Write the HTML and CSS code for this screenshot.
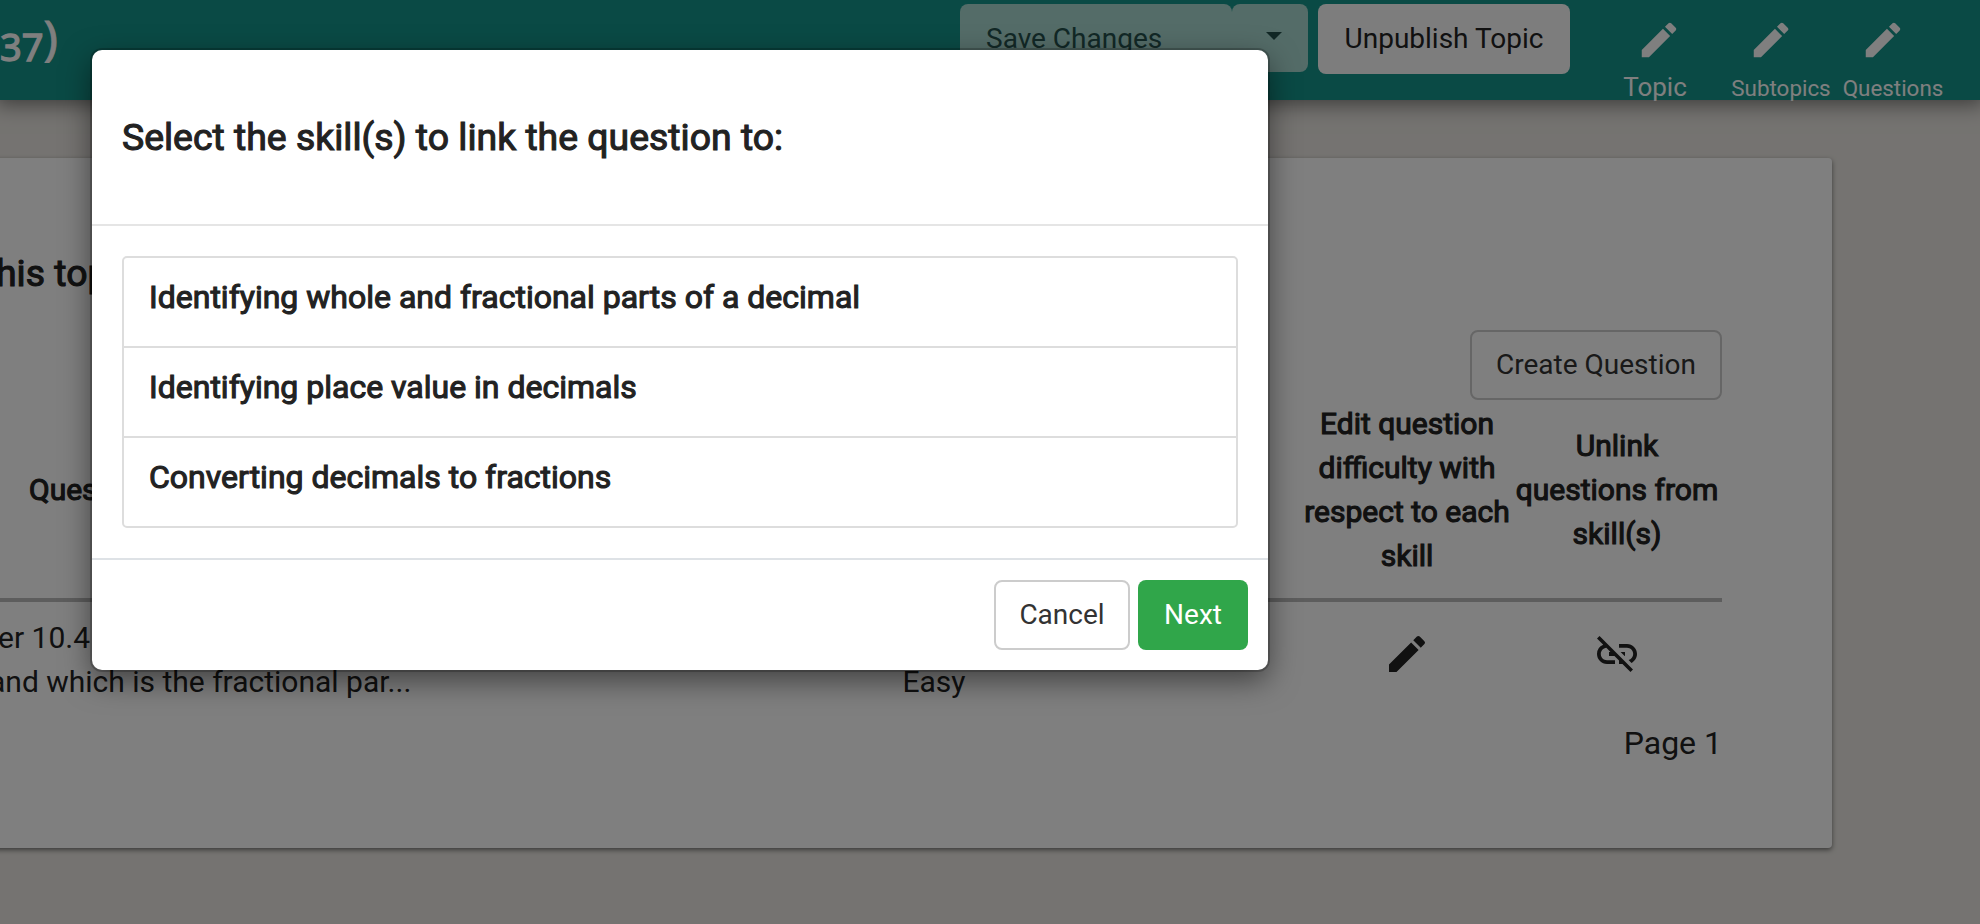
FILE: index.html
```html
<!DOCTYPE html>
<html lang="en">
<head>
<meta charset="utf-8">
<title>Topic editor</title>
<link rel="stylesheet" href="styles.css">
</head>
<body>
<svg class="defs" width="0" height="0">
  <symbol id="edit" viewBox="0 0 24 24"><path d="M3 17.25V21h3.75L17.81 9.94l-3.75-3.75L3 17.25zM20.71 7.04a1 1 0 0 0 0-1.41l-2.34-2.34a1 1 0 0 0-1.41 0l-1.83 1.83 3.75 3.75 1.83-1.83z"/></symbol>
  <symbol id="link-off" viewBox="0 0 24 24"><path d="M17 7h-4v1.9h4c1.71 0 3.1 1.39 3.1 3.1 0 1.43-.98 2.63-2.31 2.98l1.46 1.46C20.88 15.61 22 13.95 22 12c0-2.76-2.24-5-5-5zm-1 4h-2.19l2 2H16v-2zM2 4.27l3.11 3.11A4.991 4.991 0 0 0 2 12c0 2.76 2.24 5 5 5h4v-1.9H7c-1.71 0-3.1-1.39-3.1-3.1 0-1.59 1.21-2.9 2.76-3.07L8.73 11H8v2h2.73L13 15.27V17h1.73l4.01 4L20 19.74 3.27 3 2 4.27z"/></symbol>
</svg>

<header class="navbar">
  <div class="topic-title">37<span class="paren">)</span></div>
  <div class="save-group">
    <button class="btn save">Save Changes</button>
    <button class="btn caret"><i></i></button>
  </div>
  <button class="btn unpublish">Unpublish Topic</button>
  <nav class="tabs">
    <a class="tab topic"><svg><use href="#edit"/></svg><span>Topic</span></a>
    <a class="tab subtopics"><svg><use href="#edit"/></svg><span>Subtopics</span></a>
    <a class="tab questions"><svg><use href="#edit"/></svg><span>Questions</span></a>
  </nav>
</header>

<main class="card">
  <h2 class="card-title bold">his topic</h2>
  <div class="actions"><button class="btn create">Create Question</button></div>
  <div class="row head bold">
    <div class="question-head">Question</div>
    <div></div>
    <div></div>
    <div>Edit question difficulty with respect to each skill</div>
    <div>Unlink questions from skill(s)</div>
  </div>
  <div class="row item">
    <div class="question"><span class="line-one">er 10.4</span><br><span class="line-two">and which is the fractional par...</span></div>
    <div class="level">Easy</div>
    <div class="skill">t</div>
    <div class="icon"><svg><use href="#edit"/></svg></div>
    <div class="icon"><svg><use href="#link-off"/></svg></div>
  </div>
  <div class="pager">Page 1</div>
</main>

<div class="backdrop">
  <section class="modal">
    <header class="modal-header"><h3 class="bold">Select the skill(s) to link the question to:</h3></header>
    <div class="modal-body">
      <ul class="skills bold">
        <li>Identifying whole and fractional parts of a decimal</li>
        <li>Identifying place value in decimals</li>
        <li>Converting decimals to fractions</li>
      </ul>
    </div>
    <footer class="modal-footer">
      <button class="btn cancel">Cancel</button>
      <button class="btn next">Next</button>
    </footer>
  </section>
</div>
</body>
</html>
```

FILE: styles.css
```css
* { box-sizing: border-box; }
body {
  margin: 0;
  height: 924px;
  overflow: hidden;
  background: #eae7e2;
  color: #222;
  font: 30px/44px Roboto, sans-serif;
}
h2, h3, ul { margin: 0; padding: 0; font-weight: 400; list-style: none; }
.bold { -webkit-text-stroke: 1.1px currentColor; }
.defs { position: absolute; }
svg { fill: currentColor; }

.btn {
  display: block;
  margin: 0;
  padding: 0;
  height: 70px;
  border: 0;
  border-radius: 8px;
  font: 28px/66px Roboto, sans-serif;
  text-align: center;
  white-space: nowrap;
}

.navbar {
  position: relative;
  z-index: 1;
  display: flex;
  align-items: flex-start;
  height: 100px;
  padding-top: 4px;
  background: #15948a;
  box-shadow: 0 0 20px 4px rgba(0, 0, 0, 0.5);
}
.topic-title {
  width: 960px;
  color: #fff;
  font: 38px/50px "Noto Sans", sans-serif;
  padding-top: 17px;
  -webkit-text-stroke: 1.3px #fff;
}
.topic-title .paren { position: relative; top: -6px; font-size: 48px; line-height: 0; -webkit-text-stroke-width: 0.8px; }
.save-group { display: flex; width: 348px; margin-right: 10px; }
.save-group .btn { height: 68px; background: #a8d8d0; color: #24504c; }
.btn.save { width: 272px; padding: 1px 0 0 26px; text-align: left; }
.btn.caret { display: flex; width: 76px; padding: 28px 0 0 34px; }
.caret i { border: 8px solid transparent; border-top-color: #24504c; border-bottom: 0; }
.btn.unpublish { width: 252px; background: #fbfbfb; color: #222; }
.tabs { display: flex; margin-left: 33px; color: #fff; }
.tab { display: flex; flex-direction: column; align-items: center; width: 112px; padding-top: 13px; }
.tab svg { width: 46px; height: 46px; }
.tab span { margin-top: 7px; font-size: 22.4px; line-height: 36px; white-space: nowrap; }
.tab.topic span { margin-top: 6px; font-size: 26px; transform: translateX(-4px); }
.tab.subtopics span, .tab.questions span { transform: translateX(10px); }

.card {
  width: 1952px;
  height: 690px;
  margin: 58px 0 0 -120px;
  padding: 93px 110px 0 120px;
  border-radius: 4px;
  background: #fff;
  box-shadow: 0 2px 5px rgba(0, 0, 0, 0.5);
}
.card-title { margin-left: -4px; font-size: 37.4px; white-space: nowrap; }
.actions { display: flex; justify-content: flex-end; margin-top: 35px; }
.btn.create { width: 252px; border: 2px solid #ccc; background: #fff; color: #333; }
.row { display: grid; grid-template-columns: 830px 210px 262px 210px 210px; align-items: center; text-align: center; }
.row > div { white-space: nowrap; }
.head { height: 202px; padding-bottom: 18px; border-bottom: 4px solid #bababa; }
.row.head > div { white-space: normal; }
.row .question-head { padding-left: 29px; text-align: left; }
.item { height: 110px; align-items: start; padding-top: 14px; }
.row .question { text-align: left; }
.line-one { margin-left: -2px; }
.line-two { margin-left: -11px; }
.level { padding: 44px 2px 0 0; }
.row .skill { text-align: left; padding-left: 218px; }
.icon svg { display: block; width: 48px; height: 48px; margin: 14px auto 0; }
.pager { margin-top: 9px; font-size: 32px; text-align: right; }

.backdrop {
  position: absolute;
  z-index: 2;
  inset: 0;
  padding: 50px 0 0 92px;
  background: rgba(0, 0, 0, 0.5);
}
.modal {
  width: 1176px;
  height: 620px;
  border-radius: 10px;
  background: #fff;
  box-shadow: 0 0 0 2px rgba(0, 0, 0, 0.2), 0 10px 30px rgba(0, 0, 0, 0.5);
}
.modal-header { height: 176px; padding: 65px 30px 0; border-bottom: 2px solid #e5e5e5; }
.modal-header h3 { font-size: 37.4px; white-space: nowrap; }
.modal-body { padding: 30px; }
.skills { border: 2px solid #ddd; border-radius: 5px; font-size: 32px; }
.skills li { height: 90px; padding: 17px 25px 0; border-bottom: 2px solid #ddd; }
.skills li:last-child { height: 88px; border-bottom: 0; }
.modal-footer { display: flex; justify-content: flex-end; gap: 8px; padding: 20px; border-top: 2px solid #dee2e6; }
.btn.cancel { width: 136px; border: 2px solid #ccc; background: #fff; color: #333; }
.btn.next { width: 110px; background: #30a64a; color: #fff; }
```
